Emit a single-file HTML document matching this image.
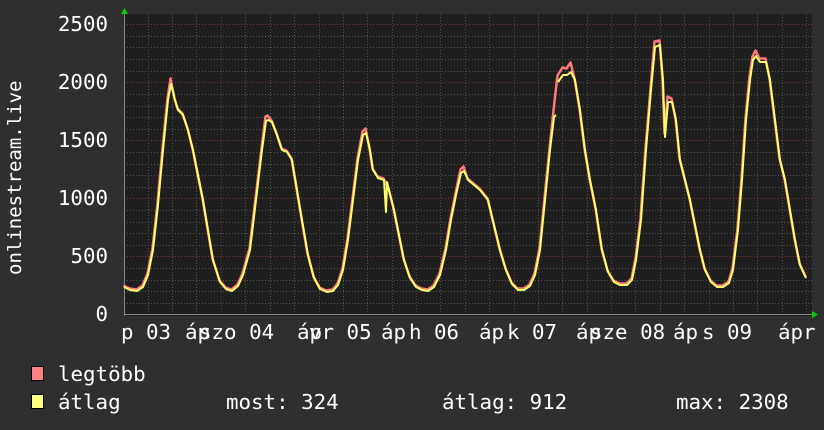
<!DOCTYPE html>
<html><head><meta charset="utf-8"><style>
html,body{margin:0;padding:0;background:#2f2f2f;}
svg{display:block;}
text{font-family:"DejaVu Sans Mono","Liberation Mono",monospace;fill:#ffffff;}
</style></head><body>
<svg width="824" height="430" viewBox="0 0 824 430" xmlns="http://www.w3.org/2000/svg">
<rect x="0" y="0" width="824" height="430" fill="#2f2f2f"/>
<rect x="124" y="14" width="688" height="302" fill="#1f1f1f"/>
<g stroke="#555" stroke-width="1" stroke-dasharray="1,2">
<line x1="124" x2="812" y1="36.5" y2="36.5"/><line x1="124" x2="812" y1="47.5" y2="47.5"/><line x1="124" x2="812" y1="59.5" y2="59.5"/><line x1="124" x2="812" y1="71.5" y2="71.5"/>
<line x1="124" x2="812" y1="94.5" y2="94.5"/><line x1="124" x2="812" y1="106.5" y2="106.5"/><line x1="124" x2="812" y1="117.5" y2="117.5"/><line x1="124" x2="812" y1="129.5" y2="129.5"/>
<line x1="124" x2="812" y1="152.5" y2="152.5"/><line x1="124" x2="812" y1="164.5" y2="164.5"/><line x1="124" x2="812" y1="175.5" y2="175.5"/><line x1="124" x2="812" y1="187.5" y2="187.5"/>
<line x1="124" x2="812" y1="210.5" y2="210.5"/><line x1="124" x2="812" y1="222.5" y2="222.5"/><line x1="124" x2="812" y1="233.5" y2="233.5"/><line x1="124" x2="812" y1="245.5" y2="245.5"/>
<line x1="124" x2="812" y1="268.5" y2="268.5"/><line x1="124" x2="812" y1="280.5" y2="280.5"/><line x1="124" x2="812" y1="291.5" y2="291.5"/><line x1="124" x2="812" y1="303.5" y2="303.5"/>
<line y1="14" y2="316" x1="148.5" x2="148.5"/><line y1="14" y2="316" x1="172.5" x2="172.5"/><line y1="14" y2="316" x1="196.5" x2="196.5"/>
<line y1="14" y2="316" x1="245.5" x2="245.5"/><line y1="14" y2="316" x1="270.5" x2="270.5"/><line y1="14" y2="316" x1="294.5" x2="294.5"/>
<line y1="14" y2="316" x1="343.5" x2="343.5"/><line y1="14" y2="316" x1="367.5" x2="367.5"/><line y1="14" y2="316" x1="392.5" x2="392.5"/>
<line y1="14" y2="316" x1="440.5" x2="440.5"/><line y1="14" y2="316" x1="465.5" x2="465.5"/><line y1="14" y2="316" x1="489.5" x2="489.5"/>
<line y1="14" y2="316" x1="538.5" x2="538.5"/><line y1="14" y2="316" x1="562.5" x2="562.5"/><line y1="14" y2="316" x1="587.5" x2="587.5"/>
<line y1="14" y2="316" x1="635.5" x2="635.5"/><line y1="14" y2="316" x1="660.5" x2="660.5"/><line y1="14" y2="316" x1="684.5" x2="684.5"/>
<line y1="14" y2="316" x1="733.5" x2="733.5"/><line y1="14" y2="316" x1="757.5" x2="757.5"/><line y1="14" y2="316" x1="782.5" x2="782.5"/>
</g>
<g stroke="#7a3a3a" stroke-width="1" stroke-dasharray="1,2">
<line x1="124" x2="812" y1="24.5" y2="24.5"/><line x1="124" x2="812" y1="82.5" y2="82.5"/><line x1="124" x2="812" y1="140.5" y2="140.5"/><line x1="124" x2="812" y1="198.5" y2="198.5"/><line x1="124" x2="812" y1="256.5" y2="256.5"/>
<line y1="14" y2="316" x1="221.5" x2="221.5"/><line y1="14" y2="316" x1="319.5" x2="319.5"/><line y1="14" y2="316" x1="416.5" x2="416.5"/><line y1="14" y2="316" x1="514.5" x2="514.5"/><line y1="14" y2="316" x1="611.5" x2="611.5"/><line y1="14" y2="316" x1="709.5" x2="709.5"/><line y1="14" y2="316" x1="806.5" x2="806.5"/>
</g>
<line x1="124" x2="816" y1="314.5" y2="314.5" stroke="#888"/>
<line x1="124.5" x2="124.5" y1="10" y2="316" stroke="#888"/>
<polygon points="121,14 124.5,8 128,14" fill="#00cc00"/>
<polygon points="812,311 818,314.5 812,318" fill="#00cc00"/>
<g fill="none" stroke-linejoin="round">
<polyline stroke="#ff7a7a" stroke-width="2.5" transform="translate(-0.5,-1.5)" points="124,287 130,290 137,291 143,287 148,275 153,250 158,205 163,150 168,100 171,80 175,100 178,110 183,115 188,130 193,150 198,175 203,200 208,230 213,260 220,282 226,289 232,291 238,286 243,275 250,250 256,200 262,150 266,118 268,117 272,122 277,135 282,150 287,152 292,160 297,190 302,220 308,255 314,278 320,289 327,292 333,291 338,285 343,270 348,240 353,200 358,160 363,133 366,130 370,150 373,170 378,178 384,180 389,190 394,210 399,235 404,260 410,278 416,287 422,290 428,291 434,287 440,275 446,250 451,220 456,195 461,171 464,168 468,180 474,185 480,190 488,200 494,225 500,250 506,270 512,284 518,290 524,290 530,286 535,275 540,250 545,200 550,150 554,112 558,77 563,69 567,70 571,64 575,80 580,110 585,150 590,180 596,210 602,250 608,272 614,282 620,285 627,285 632,280 636,260 641,220 646,150 651,90 655,43 660,42 663,80 665,135 668,98 672,100 676,120 680,160 685,180 690,200 695,225 700,250 705,270 711,282 717,287 723,287 729,283 733,270 738,230 742,180 746,120 750,78 753,58 756,52 760,60 766,60 770,80 775,120 780,160 785,180 790,210 795,240 800,265 806,278"/>
<polyline stroke="#ffff66" stroke-width="2" points="124,287 130,290 137,291 143,287 148,275 153,250 158,205 163,150 168,100 171,84 175,100 178,110 183,115 188,130 193,150 198,175 203,200 208,230 213,260 220,282 226,289 232,291 238,286 243,275 250,250 256,200 262,150 266,121 268,120 272,122 277,135 282,150 287,152 292,160 297,190 302,220 308,255 314,278 320,289 327,292 333,291 338,285 343,270 348,240 353,200 358,160 363,135 366,133 370,150 373,170 378,178 384,180 386,212 387,182 389,190 394,210 399,235 404,260 410,278 416,287 422,290 428,291 434,287 440,275 446,250 451,220 456,195 461,173 464,171 468,180 474,185 480,190 488,200 494,225 500,250 506,270 512,284 518,290 524,290 530,286 535,275 540,250 545,200 550,150 554,117 556,115"/>
<polyline stroke="#ffff66" stroke-width="2" points="558,82 563,75 567,75 571,72 575,80 580,110 585,150 590,180 596,210 602,250 608,272 614,282 620,285 627,285 632,280 636,260 641,220 646,150 651,90 655,47 660,45 663,80 665,137 668,102 672,102 676,120 680,160 685,180 690,200 695,225 700,250 705,270 711,282 717,287 723,287 729,283 733,270 738,230 742,180 746,120 750,80 753,60 756,56 760,62 766,62 770,80 775,120 780,160 785,180 790,210 795,240 800,265 806,278"/>
</g>
<g font-size="20.8" text-anchor="end">
<text x="108" y="31">2500</text><text x="108" y="89">2000</text><text x="108" y="147">1500</text><text x="108" y="205">1000</text><text x="108" y="263">500</text><text x="108" y="321">0</text>
</g>
<text font-size="19" transform="translate(21,275) rotate(-90)">onlinestream.live</text>
<g font-size="20.8">
<text x="121" y="339">p 03</text><text x="185" y="339">áp</text><text x="199" y="339">szo 04</text>
<text x="297" y="339">áp</text><text x="309" y="339">vr 05</text>
<text x="381" y="339">áp</text><text x="409" y="339">h 06</text>
<text x="479" y="339">áp</text><text x="507" y="339">k 07</text>
<text x="576" y="339">áp</text><text x="590" y="339">sze 08</text>
<text x="673" y="339">áp</text><text x="702" y="339">s 09</text>
<text x="778" y="339">ápr</text>
</g>
<rect x="31.5" y="366.5" width="12" height="14" fill="#ff8080" stroke="#000"/>
<rect x="31.5" y="394.5" width="12" height="14" fill="#ffff80" stroke="#000"/>
<g font-size="20.8">
<text x="58" y="381">legtöbb</text>
<text x="58" y="409">átlag</text>
<text x="226" y="409">most: 324</text>
<text x="442" y="409">átlag: 912</text>
<text x="676" y="409">max: 2308</text>
</g>
</svg>
</body></html>
